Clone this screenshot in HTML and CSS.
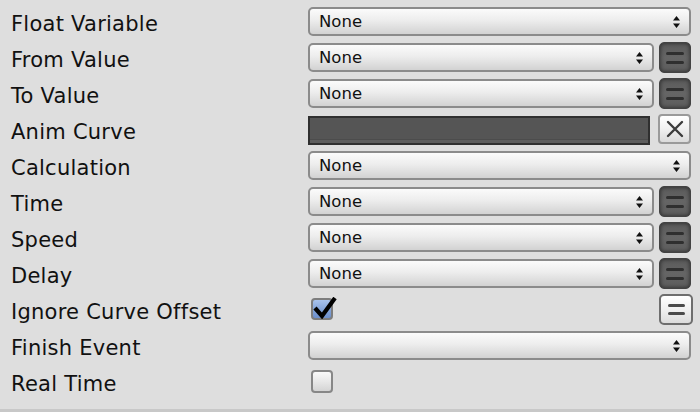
FILE: index.html
```html
<!DOCTYPE html>
<html>
<head>
<meta charset="utf-8">
<link rel="stylesheet" href="styles.css">
</head>
<body>
<div class="panel">
  <div class="row">
    <div class="label">Float Variable</div>
    <div class="field">
      <div class="select"><span class="value">None</span><svg class="arrows" viewBox="0 0 7 12" width="7" height="12"><path d="M3.5 0 L7 4.5 L0 4.5 Z M0 7.5 L7 7.5 L3.5 12 Z"/></svg></div>
    </div>
  </div>
  <div class="row">
    <div class="label">From Value</div>
    <div class="field">
      <div class="select"><span class="value">None</span><svg class="arrows" viewBox="0 0 7 12" width="7" height="12"><path d="M3.5 0 L7 4.5 L0 4.5 Z M0 7.5 L7 7.5 L3.5 12 Z"/></svg></div>
      <div class="btn-eq dark"><span class="bar"></span><span class="bar"></span></div>
    </div>
  </div>
  <div class="row">
    <div class="label">To Value</div>
    <div class="field">
      <div class="select"><span class="value">None</span><svg class="arrows" viewBox="0 0 7 12" width="7" height="12"><path d="M3.5 0 L7 4.5 L0 4.5 Z M0 7.5 L7 7.5 L3.5 12 Z"/></svg></div>
      <div class="btn-eq dark"><span class="bar"></span><span class="bar"></span></div>
    </div>
  </div>
  <div class="row">
    <div class="label">Anim Curve</div>
    <div class="field curve-field">
      <div class="curve"></div>
      <div class="btn-x"><svg viewBox="0 0 18 18" width="18" height="18"><path d="M2 2 L16 16 M16 2 L2 16" stroke="#3c3c3c" stroke-width="2.4" stroke-linecap="round"/></svg></div>
    </div>
  </div>
  <div class="row">
    <div class="label">Calculation</div>
    <div class="field">
      <div class="select"><span class="value">None</span><svg class="arrows" viewBox="0 0 7 12" width="7" height="12"><path d="M3.5 0 L7 4.5 L0 4.5 Z M0 7.5 L7 7.5 L3.5 12 Z"/></svg></div>
    </div>
  </div>
  <div class="row">
    <div class="label">Time</div>
    <div class="field">
      <div class="select"><span class="value">None</span><svg class="arrows" viewBox="0 0 7 12" width="7" height="12"><path d="M3.5 0 L7 4.5 L0 4.5 Z M0 7.5 L7 7.5 L3.5 12 Z"/></svg></div>
      <div class="btn-eq dark"><span class="bar"></span><span class="bar"></span></div>
    </div>
  </div>
  <div class="row">
    <div class="label">Speed</div>
    <div class="field">
      <div class="select"><span class="value">None</span><svg class="arrows" viewBox="0 0 7 12" width="7" height="12"><path d="M3.5 0 L7 4.5 L0 4.5 Z M0 7.5 L7 7.5 L3.5 12 Z"/></svg></div>
      <div class="btn-eq dark"><span class="bar"></span><span class="bar"></span></div>
    </div>
  </div>
  <div class="row">
    <div class="label">Delay</div>
    <div class="field">
      <div class="select"><span class="value">None</span><svg class="arrows" viewBox="0 0 7 12" width="7" height="12"><path d="M3.5 0 L7 4.5 L0 4.5 Z M0 7.5 L7 7.5 L3.5 12 Z"/></svg></div>
      <div class="btn-eq dark"><span class="bar"></span><span class="bar"></span></div>
    </div>
  </div>
  <div class="row">
    <div class="label">Ignore Curve Offset</div>
    <div class="field spread">
      <div class="checkbox checked"><svg class="check" viewBox="0 0 26 22" width="26" height="22"><path d="M3 11 L10 19 L23 1" fill="none" stroke="#000" stroke-width="4.2" stroke-linejoin="miter" stroke-linecap="butt"/></svg></div>
      <div class="btn-eq light"><span class="bar"></span><span class="bar"></span></div>
    </div>
  </div>
  <div class="row">
    <div class="label">Finish Event</div>
    <div class="field">
      <div class="select"><span class="value"></span><svg class="arrows" viewBox="0 0 7 12" width="7" height="12"><path d="M3.5 0 L7 4.5 L0 4.5 Z M0 7.5 L7 7.5 L3.5 12 Z"/></svg></div>
    </div>
  </div>
  <div class="row">
    <div class="label">Real Time</div>
    <div class="field">
      <div class="checkbox"></div>
    </div>
  </div>
</div>
</body>
</html>
```

FILE: styles.css
```css
html, body {
  margin: 0;
  padding: 0;
  background: #dedede;
}

body {
  width: 700px;
  height: 412px;
  overflow: hidden;
  font-family: "DejaVu Sans", "Liberation Sans", sans-serif;
  color: #111;
}

.panel {
  box-sizing: border-box;
  height: 412px;
  padding: 3px 0 10px 0;
  border-bottom: 3px solid #c8c8c8;
}

.row {
  display: grid;
  grid-template-columns: 297px 383px;
  height: 36px;
  padding: 0 9px 0 11px;
  align-items: center;
}

.label {
  font-size: 21px;
  line-height: 24px;
  padding-top: 5px;
  letter-spacing: 0.25px;
  white-space: nowrap;
}

.field {
  display: flex;
  align-items: center;
  gap: 5px;
  height: 36px;
}

.field.spread {
  justify-content: space-between;
}

.field.curve-field {
  gap: 8px;
}

.select {
  flex: 1;
  box-sizing: border-box;
  height: 29px;
  border: 2px solid #8b8b8b;
  border-radius: 5px;
  background: linear-gradient(#fbfbfb 0%, #ededed 45%, #dcdcdc 80%, #d2d2d2 100%);
  display: flex;
  align-items: center;
  padding: 0 9px 0 9px;
}

.select .value {
  flex: 1;
  font-size: 16.5px;
  line-height: 20px;
  padding-top: 1px;
  color: #111;
}

.select .arrows {
  fill: #111;
  display: block;
  margin-top: 1px;
}

.btn-eq {
  box-sizing: border-box;
  width: 32px;
  height: 31px;
  border-radius: 5px;
  display: flex;
  flex-direction: column;
  align-items: center;
  justify-content: center;
  gap: 6px;
  padding-top: 2px;
}

.btn-eq.dark {
  background: linear-gradient(#5a5a5a, #656565 50%, #5c5c5c);
  border: 1px solid #434343;
  box-shadow: inset 0 0 4px rgba(0, 0, 0, 0.6);
}

.btn-eq.dark .bar {
  display: block;
  width: 18px;
  height: 3px;
  border-radius: 2px;
  background: #2f2f2f;
}

.btn-eq.light {
  width: 34px;
  margin-right: -2px;
  background: linear-gradient(#ffffff, #f0f0f0 50%, #dcdcdc);
  border: 2px solid #6e6e6e;
  border-radius: 5px;
  gap: 5px;
  padding-top: 1px;
}

.btn-eq.light .bar {
  display: block;
  width: 17px;
  height: 3px;
  border-radius: 2px;
  background: #4a4a4a;
}

.curve {
  box-sizing: border-box;
  width: 342px;
  height: 29px;
  margin-top: 3px;
  background: #555555;
  border: 2px solid #2f2f2f;
  box-shadow: inset 0 -3px 0 #5d5d5d, inset 0 -4px 0 #4c4c4c;
}

.btn-x {
  box-sizing: border-box;
  width: 33px;
  height: 30px;
  border: 2px solid #9a9a9a;
  border-radius: 4px;
  background: linear-gradient(#ffffff, #f0f0f0 50%, #dadada);
  display: flex;
  align-items: center;
  justify-content: center;
}

.btn-x svg {
  display: block;
}

.checkbox {
  position: relative;
  box-sizing: border-box;
  width: 22px;
  height: 23px;
  margin-left: 3px;
  border: 2px solid #878787;
  border-radius: 4px;
  background: linear-gradient(#fafafa, #e4e4e4 60%, #d4d4d4);
}

.checkbox.checked {
  height: 22px;
  background: linear-gradient(#a9c3ec, #86a6da 50%, #6c8fcb);
  border-color: #7d7d7d;
}

.checkbox .check {
  position: absolute;
  left: -1px;
  top: -3px;
}
```
